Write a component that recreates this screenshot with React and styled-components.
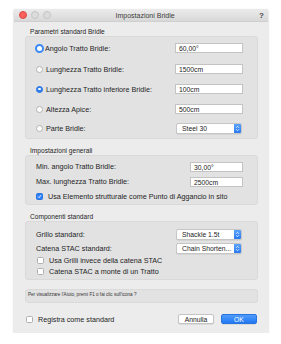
import React from "react";
import styled, { createGlobalStyle } from "styled-components";

const GlobalStyle = createGlobalStyle`
  html, body {
    margin: 0;
    padding: 0;
    background: #ffffff;
  }
  body {
    font-family: "Liberation Sans", Arial, sans-serif;
    color: #1e1e1e;
  }
`;

const Window = styled.div`
  margin: 9px 0 0 14px;
  width: 254px;
  height: 324px;
  background: #ececec;
  box-shadow: 0 1px 2px rgba(0, 0, 0, 0.25);
  display: flex;
  flex-direction: column;
`;

const TitleBar = styled.div`
  height: 12px;
  background: linear-gradient(#ebebeb, #d8d8d8);
  border-bottom: 1px solid #cfcfcf;
  display: flex;
  align-items: center;
  padding: 0 4px;
  font-size: 7px;
  color: #3c3c3c;
`;

const Lights = styled.div`
  display: flex;
  gap: 4px;
  padding-left: 1px;
`;

const Light = styled.span`
  width: 6px;
  height: 6px;
  border-radius: 50%;
  background: ${(p) => p.$color};
  border: 0.5px solid ${(p) => (p.$color === "#fc605c" ? "#de4a46" : "#c4c4c4")};
`;

const Title = styled.div`
  flex: 1;
  text-align: center;
  margin-right: 20px;
`;

const HelpIcon = styled.span`
  font-weight: bold;
  font-size: 8px;
  color: #444;
`;

const Body = styled.div`
  flex: 1;
  padding: 6px 10px 0 11px;
  display: flex;
  flex-direction: column;
`;

const GroupLabel = styled.div`
  font-size: 6.6px;
  height: 8px;
  line-height: 8px;
  padding-left: 5px;
  margin-top: ${(p) => p.$top || 0}px;
`;

const Box = styled.div`
  background: #e2e2e2;
  border: 1px solid #d9d9d9;
  border-radius: 3px;
  padding: ${(p) => p.$pad};
  display: flex;
  flex-direction: column;
`;

const Row = styled.div`
  height: ${(p) => p.$h}px;
  display: flex;
  align-items: center;
  padding-left: ${(p) => p.$left || 0}px;
  font-size: 7.2px;
`;

const RowLabel = styled.span`
  flex: 1;
  white-space: nowrap;
`;

const Radio = styled.span`
  width: 7px;
  height: 7px;
  border-radius: 50%;
  box-sizing: border-box;
  margin: 0 3px 0 10px;
  flex-shrink: 0;
  background: ${(p) => (p.$checked ? "#2f7ff5" : "#ffffff")};
  border: ${(p) =>
    p.$focus
      ? "2px solid #3b88f7"
      : p.$checked
      ? "0.5px solid #2a74e0"
      : "0.5px solid #b3b3b3"};
  display: flex;
  align-items: center;
  justify-content: center;
  ${(p) => (p.$focus ? "width: 9px; height: 9px; margin: 0 1px 0 9px;" : "")}
  &::after {
    content: "";
    width: 2.5px;
    height: 2.5px;
    border-radius: 50%;
    background: #ffffff;
    display: ${(p) => (p.$checked ? "block" : "none")};
  }
`;

const Field = styled.div`
  width: ${(p) => p.$w}px;
  height: 10px;
  box-sizing: border-box;
  background: #ffffff;
  border: 0.5px solid #c3c3c3;
  margin-right: 14px;
  font-size: 6.8px;
  line-height: 9px;
  padding-left: 3px;
  color: #222;
`;

const Popup = styled.div`
  width: 66px;
  height: 11px;
  box-sizing: border-box;
  background: #ffffff;
  border: 0.5px solid #c6c6c6;
  border-radius: 2px;
  margin-right: 15px;
  display: flex;
  align-items: center;
  font-size: 6.8px;
  box-shadow: 0 0.5px 0.5px rgba(0, 0, 0, 0.12);
  overflow: hidden;
`;

const PopupText = styled.span`
  flex: 1;
  padding-left: 5px;
  white-space: nowrap;
`;

const Stepper = styled.span`
  width: 7px;
  align-self: stretch;
  background: linear-gradient(#5aa2f9, #2a79f2);
  display: flex;
  align-items: center;
  justify-content: center;
`;

const Check = styled.span`
  width: 7px;
  height: 7px;
  box-sizing: border-box;
  border-radius: 1.5px;
  flex-shrink: 0;
  margin-right: 5px;
  background: ${(p) => (p.$checked ? "#2f7ff5" : "#ffffff")};
  border: 0.5px solid ${(p) => (p.$checked ? "#2a74e0" : "#b0b0b0")};
  display: flex;
  align-items: center;
  justify-content: center;
`;

const HelpBox = styled.div`
  margin-top: 9px;
  height: 14px;
  box-sizing: border-box;
  background: #e2e2e2;
  border: 1px solid #dadada;
  border-radius: 3px;
  font-size: 4.6px;
  color: #333;
  padding-left: 2px;
  padding-top: 2px;
`;

const Footer = styled.div`
  display: flex;
  align-items: center;
  margin-top: 11px;
  height: 10px;
`;

const FooterCheck = styled.label`
  flex: 1;
  display: flex;
  align-items: center;
  font-size: 7.2px;
  padding-left: 1px;
`;

const Button = styled.div`
  width: 36px;
  height: 10px;
  box-sizing: border-box;
  border-radius: 2px;
  font-size: 6.8px;
  display: flex;
  align-items: center;
  justify-content: center;
  margin-left: ${(p) => p.$gap || 0}px;
  background: ${(p) => (p.$primary ? "linear-gradient(#4f9cfa, #2378f4)" : "#ffffff")};
  color: ${(p) => (p.$primary ? "#ffffff" : "#222")};
  border: 0.5px solid ${(p) => (p.$primary ? "#2a74e0" : "#c4c4c4")};
  box-shadow: 0 0.5px 0.5px rgba(0, 0, 0, 0.15);
`;

const FooterEnd = styled.span`
  width: 1px;
`;

const Arrows = () => (
  <svg width="5" height="7" viewBox="0 0 5 7">
    <path d="M1 2.8 L2.5 1.3 L4 2.8 M1 4.2 L2.5 5.7 L4 4.2" stroke="#fff" strokeWidth="0.8" fill="none" />
  </svg>
);

const Tick = () => (
  <svg width="5" height="5" viewBox="0 0 5 5">
    <path d="M1 2.6 L2.1 3.7 L4 1.2" stroke="#fff" strokeWidth="0.9" fill="none" />
  </svg>
);

const PopupField = ({ value }) => (
  <Popup>
    <PopupText>{value}</PopupText>
    <Stepper>
      <Arrows />
    </Stepper>
  </Popup>
);

export default function App() {
  return (
    <>
      <GlobalStyle />
      <Window>
        <TitleBar>
          <Lights>
            <Light $color="#fc605c" />
            <Light $color="#dcdcdc" />
            <Light $color="#dcdcdc" />
          </Lights>
          <Title>Impostazioni Bridle</Title>
          <HelpIcon>?</HelpIcon>
        </TitleBar>
        <Body>
          <GroupLabel>Parametri standard Bridle</GroupLabel>
          <Box $pad="0 0 1px">
            <Row $h={22}>
              <Radio $focus />
              <RowLabel>Angolo Tratto Bridle:</RowLabel>
              <Field $w={68}>60,00°</Field>
            </Row>
            <Row $h={20}>
              <Radio />
              <RowLabel>Lunghezza Tratto Bridle:</RowLabel>
              <Field $w={68}>1500cm</Field>
            </Row>
            <Row $h={20}>
              <Radio $checked />
              <RowLabel>Lunghezza Tratto inferiore Bridle:</RowLabel>
              <Field $w={68}>100cm</Field>
            </Row>
            <Row $h={20}>
              <Radio />
              <RowLabel>Altezza Apice:</RowLabel>
              <Field $w={68}>500cm</Field>
            </Row>
            <Row $h={18}>
              <Radio />
              <RowLabel>Parte Bridle:</RowLabel>
              <PopupField value="Steel 30" />
            </Row>
          </Box>

          <GroupLabel $top={8}>Impostazioni generali</GroupLabel>
          <Box $pad="3px 0 1px">
            <Row $h={15} $left={10}>
              <RowLabel>Min. angolo Tratto Bridle:</RowLabel>
              <Field $w={53}>30,00°</Field>
            </Row>
            <Row $h={15} $left={10}>
              <RowLabel>Max. lunghezza Tratto Bridle:</RowLabel>
              <Field $w={53}>2500cm</Field>
            </Row>
            <Row $h={14} $left={10}>
              <Check $checked>
                <Tick />
              </Check>
              <RowLabel>Usa Elemento strutturale come Punto di Aggancio in sito</RowLabel>
            </Row>
          </Box>

          <GroupLabel $top={8}>Componenti standard</GroupLabel>
          <Box $pad="5px 0 2px">
            <Row $h={14} $left={10}>
              <RowLabel>Grillo standard:</RowLabel>
              <PopupField value="Shackle 1.5t" />
            </Row>
            <Row $h={14} $left={10}>
              <RowLabel>Catena STAC standard:</RowLabel>
              <PopupField value="Chain Shorten..." />
            </Row>
            <Row $h={11} $left={11}>
              <Check />
              <RowLabel>Usa Grilli invece della catena STAC</RowLabel>
            </Row>
            <Row $h={11} $left={11}>
              <Check />
              <RowLabel>Catena STAC a monte di un Tratto</RowLabel>
            </Row>
          </Box>

          <HelpBox>Per visualizzare l'Aiuto, premi F1 o fai clic sull'icona ?</HelpBox>

          <Footer>
            <FooterCheck>
              <Check />
              Registra come standard
            </FooterCheck>
            <Button>Annulla</Button>
            <Button $primary $gap={7}>
              OK
            </Button>
            <FooterEnd />
          </Footer>
        </Body>
      </Window>
    </>
  );
}
